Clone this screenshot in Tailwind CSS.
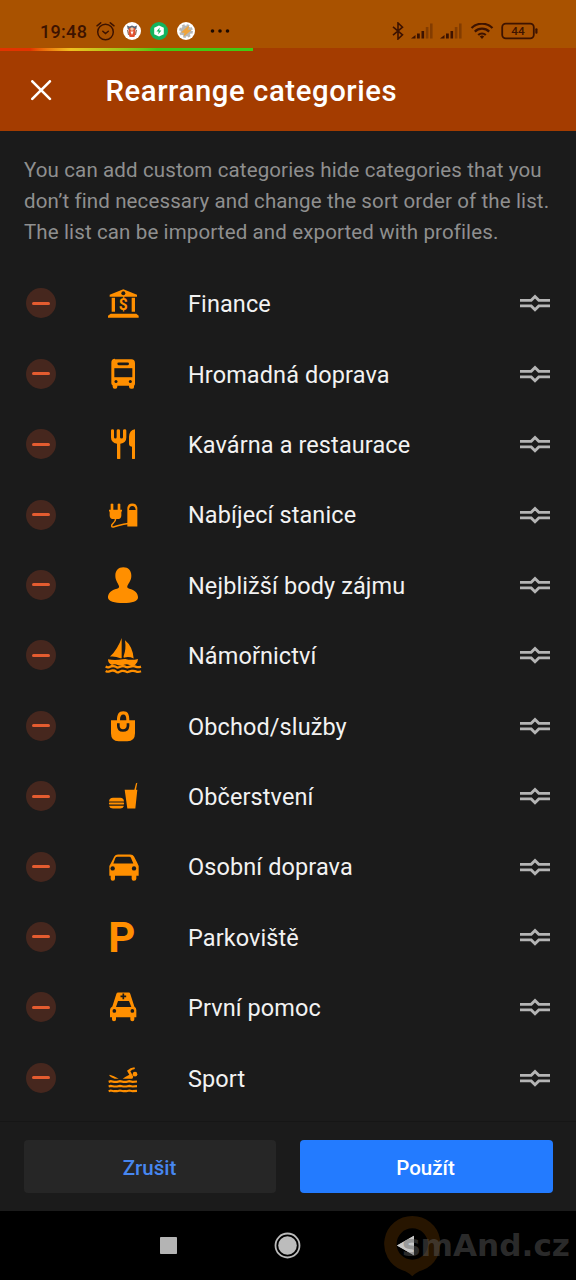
<!DOCTYPE html>
<html lang="cs">
<head>
<meta charset="utf-8">
<title>Rearrange categories</title>
<script src="https://cdn.jsdelivr.net/npm/@tailwindcss/browser@4"></script>
</head>
<body class="bg-black font-['Roboto',sans-serif]">
<div class="relative w-[576px] h-[1280px] overflow-hidden bg-[#1b1b1b] flex flex-col">

  <!-- status bar -->
  <div class="h-[48px] shrink-0 bg-[#a95200] flex items-end pl-10 pr-[38.500px] text-[#3d1300]">
    <div class="flex items-center h-[34px] w-full">
      <span class="w-[56px] text-[18px] leading-none font-medium tracking-[0.300px] pt-[2px]">19:48</span>
      <svg class="w-5 h-5 shrink-0" viewBox="0 0 20 20" fill="none" stroke="currentColor" stroke-width="1.500" stroke-linecap="round"><circle cx="9.500" cy="11" r="7.800"/><path d="M6.800 10.200l2.700 2.400 2.800-2.400M1 4.800L4.700 1.800M18 4.800L14.300 1.800"/></svg>
      <svg class="ml-[7px] w-[18px] h-[18px] shrink-0" viewBox="0 0 18 18"><circle cx="9" cy="9" r="9" fill="#fff"/><path d="M4 3.500l2.500 1 2.500-1 2.500 1 2.500-1-.8 4H4.800z" fill="#5b6675"/><path d="M6 6h6l.8 5-1.500 4H6.700l-1.500-4z" fill="#e2502d"/><circle cx="9" cy="7" r="1.700" fill="#f3c9a5"/><path d="M7.500 9.500h3L9 13z" fill="#fff"/><path d="M4.500 8l1 5M13.500 8l-1 5" stroke="#8a6a55"/></svg>
      <svg class="ml-[9px] w-[18px] h-[18px] shrink-0" viewBox="0 0 18 18"><circle cx="9" cy="9" r="9" fill="#12b45e"/><path d="M9 3.500l4.800 2.200v6.600L9 14.600l-4.800-2.300V5.700z" fill="#fff"/><path d="M9.800 5.500L6.500 9.600h2.200l-.6 3 3.300-4.200H9.200z" fill="#12b45e"/></svg>
      <svg class="ml-[9px] w-[18px] h-[18px] shrink-0" viewBox="0 0 18 18"><circle cx="9" cy="9" r="9" fill="#fff"/><circle cx="9" cy="9" r="5.400" fill="#b7b7b4"/><circle cx="9" cy="9" r="5.900" fill="none" stroke="#b7b7b4" stroke-width="2" stroke-dasharray="2.600 2.030"/><path d="M11.500 4.500L5.500 10l3 .3-1.300 3.200L13 8.500l-2.800-.4z" fill="#f0a53c" stroke="#f0a53c" stroke-width="1.200"/></svg>
      <svg class="ml-[15px] w-5 h-4 shrink-0" viewBox="0 0 20 16" fill="#1c0a00"><circle cx="2.500" cy="8" r="1.800"/><circle cx="10" cy="8" r="1.800"/><circle cx="17.500" cy="8" r="1.800"/></svg>
      <div class="ml-auto flex items-center">
        <svg class="w-3 h-[18px]" viewBox="0 0 12 18" fill="none" stroke="currentColor" stroke-width="1.600"><path d="M1 4.800l9.500 8L6 17V1l4.500 4.200-9.500 8"/></svg>
        <svg class="ml-[7px] w-[22px] h-4" viewBox="0 0 22 16" fill="currentColor"><path d="M0 15.500L4.500 12v3.500zM6 10.500h2.800v5H6zM10.500 8h2.600v7.500h-2.600z"/><path opacity=".35" d="M14.800 4h2.600v11.500h-2.600zM19 .500h2.600v15H19z"/></svg>
        <svg class="ml-[7px] w-[22px] h-4" viewBox="0 0 22 16" fill="currentColor"><path d="M0 15.500L4.500 12v3.500zM6 10.500h2.800v5H6zM10.500 8h2.600v7.500h-2.600z"/><path opacity=".35" d="M14.800 4h2.600v11.500h-2.600zM19 .500h2.600v15H19z"/></svg>
        <svg class="ml-[8px] w-6 h-4" viewBox="0 0 24 16" fill="none" stroke="currentColor" stroke-width="2.200"><path d="M1.500 5a15 15 0 0 1 21 0M4.800 8.600a10.300 10.300 0 0 1 14.400 0M8.200 12a5.600 5.600 0 0 1 7.600 0"/><path d="M9.800 13.600a3 3 0 0 1 4.400 0L12 16z" fill="currentColor" stroke="none"/></svg>
        <svg class="ml-[7px] w-[37px] h-[18px]" viewBox="0 0 37 18"><rect x="1.200" y="1.700" width="31.600" height="14.600" rx="3.600" fill="none" stroke="currentColor" stroke-width="1.800"/><rect x="34.300" y="6.300" width="2.200" height="5.400" rx="1" fill="currentColor"/><text x="17" y="13.200" text-anchor="middle" font-size="11.800" font-weight="500" fill="currentColor">44</text></svg>
      </div>
    </div>
  </div>

  <!-- title bar -->
  <div class="h-[82.500px] shrink-0 bg-[#a43c00]">
    <div class="h-[3px] w-[253px] bg-linear-to-r from-[#e23400] from-12% via-[#f0c020] via-28% to-[#44c814] to-62%"></div>
    <div class="flex items-center h-20 pl-[30px]">
      <svg class="w-[22px] h-[22px]" viewBox="0 0 22 22" fill="none" stroke="#fff" stroke-width="2.600" stroke-linecap="round"><path d="M2.300 1.300l17.600 17.600M19.900 1.300L2.300 18.900"/></svg>
      <h1 class="ml-[53.500px] text-[29.300px] leading-[36px] font-medium tracking-[0.580px] text-white">Rearrange categories</h1>
    </div>
  </div>

  <!-- description -->
  <p class="h-[137.700px] shrink-0 pt-[24.500px] pl-6 text-[20.530px] leading-[31px] tracking-[0.120px] text-[#8f8f8f] whitespace-nowrap">You can add custom categories hide categories that you<br>don’t find necessary and change the sort order of the list.<br>The list can be imported and exported with profiles.</p>

  <!-- categories -->
  <ul id="list" class="shrink-0 h-[853px] text-[23.470px] tracking-[0.110px] text-[#f2f2f2]"></ul>

  <!-- buttons -->
  <div class="h-[90px] shrink-0 border-t border-[#161616] bg-[#1b1b1b] px-[23.500px] pt-[18px] flex gap-6 text-[20.530px] font-medium">
    <button class="flex-1 h-[53px] rounded-[4px] bg-[#262626] text-[#4787f0] pt-[3px]">Zrušit</button>
    <button class="flex-1 h-[53px] rounded-[4px] bg-[#237bff] text-white pt-[3px] pr-px">Použít</button>
  </div>

  <!-- navigation bar -->
  <div class="relative flex-1 bg-black">
    <svg class="w-[576px] h-[70px]" viewBox="0 1211 576 70">
      <rect x="160" y="1237" width="17" height="17" rx=".8" fill="#b4b4b4"/>
      <circle cx="287.500" cy="1245.500" r="12" fill="none" stroke="#bcbcbc" stroke-width="1.800"/>
      <circle cx="287.500" cy="1245.500" r="9.300" fill="#bcbcbc"/>
      <path d="M397 1245.500L414 1235.700V1255.200Z" fill="#c6c6c6"/>
      <path fill-rule="evenodd" d="M412.300 1216a28 28 0 0 1 10.500 54c-4.500 1.300-7 3-10.500 6.300-3.500-3.300-6-5-10.500-6.300a28 28 0 0 1 10.500-54zm0 12.300a15.700 15.700 0 1 0 0 31.400 15.700 15.700 0 0 0 0-31.400z" fill="#271500"/>
      <path d="M397 1245.500L414 1235.700V1255.200Z" fill="#c6c6c6"/>
      <text x="402" y="1255.800" font-family="DejaVu Sans, sans-serif" font-weight="bold" font-size="29.500" textLength="168" lengthAdjust="spacingAndGlyphs" fill="#606060" fill-opacity=".45">smAnd.cz</text>
    </svg>
  </div>
</div>

<template id="row">
  <li class="h-[70.400px] flex items-center pl-[26px] pr-[26px]">
    <span class="w-[30px] h-[30px] rounded-full bg-[#46271e] flex items-center justify-center"><span class="w-[18px] h-[3px] rounded-full bg-[#e45c30]"></span></span>
    <svg data-icon class="ml-[47px] w-10 h-10 overflow-visible" fill="#ff8f00"></svg>
    <span data-name class="ml-[45px] pt-[3px]"></span>
    <svg class="ml-auto w-[30px] h-[20px]" viewBox="0 0 30 20" fill="none" stroke="#b5b5b5" stroke-width="2.800"><path d="M0 7.300h11.200L15 3.400l3.800 3.900H30M0 12.900h11.200l3.800 3.900 3.800-3.900H30"/></svg>
  </li>
</template>
<script>
const D = '#1b1b1b';
const rows = [
 ['Finance', '309 40 120 120', `<path d="M329 81V75L370 58.500L411 75V81Z"/><circle cx="370" cy="71" r="6" fill="${D}"/><path d="M335 84h10v42h-10zM395 84h10v42h-10zM332 132h77l7 6v6h-92v-6z"/><text x="370" y="121" text-anchor="middle" font-size="47" font-weight="bold" letter-spacing="0">$</text>`],
 ['Hromadná doprava', '309 251.400 120 120', `<path d="M345 267h49q11 0 11 12v61q0 5-3 7v4q0 5-6 5h-3q-6 0-6-6v-3h-35v3q0 6-6 6h-2q-6 0-6-6v-4q-4-3-4-7v-61q0-12 11-12z"/><rect x="352" y="277" width="35" height="8" rx="4" fill="${D}"/><path d="M343 294h54v27h-54z" fill="${D}"/><circle cx="348" cy="334" r="4.500" fill="${D}"/><circle cx="391" cy="334" r="4.500" fill="${D}"/>`],
 ['Kavárna a restaurace', '309 462.600 120 120', `<path d="M333 482q0-4 4.500-4t4.500 4v20q0 4 4 4t4-4v-20q0-4 5-4t5 4v20q0 4 4.500 4t4.500-4v-20q0-4 5-4t5 4v21q0 16-18 19v45q-5 1-10 0v-45q-18-4-18-19zM405 478v89q-5 1-9 0v-36q-9-2-9-8v-22q1-21 18-23z"/>`],
 ['Nabíjecí stanice', '309 43.800 120 120', `<path d="M332 71q4-4 8 0v17h13v-17q4-4 8 0v17h5v5h-2v12q0 11-12 11h-11q-12 0-12-11v-12h-2v-5h5z"/><path d="M347 114c0 14-14 15-12 23 2 9 24-7 50-8" fill="none" stroke="#ff8f00" stroke-width="4.500"/><path d="M382 138V82q2-13 15-13t15 13v56z"/><path d="M387 89q1-12 10-12t10 12z" fill="${D}"/>`],
 ['Nejbližší body zájmu', '309 255 120 120', `<path d="M370 262c15 0 24 10 24 25 0 14-8 22-12 31-1 5 1 7 6 8 16 3 27 14 26 27-1 10-17 16-44 16s-45-6-46-16c-1-13 10-24 27-27 5-1 7-3 6-8-3-9-11-17-11-31 0-15 9-25 24-25z"/>`],
 ['Námořnictví', '309 466.200 120 120', `<path d="M365 475v61h-4q-15-7-31-5 23-22 35-56zM375 482q23 18 26 55-14-7-27-3-5 1-3-5 8-20 4-47zM324 539q20 4 44 0l8-1q18 5 38 0 0 11-9 18-9 4-17 0-8-4-18 0-8 4-17 0-8-4-17 0-12-4-12-17z"/><path d="M317 561q5 3 9 2l9-3q9-1 13 2t9 1l8-3q8-1 13 2 4 2 9 0l8-2q9-1 14 2 6 2 14-1M317 574q5 3 9 2l9-3q9-1 13 3t9 1l8-3q8-1 13 2 4 3 9 0l8-2q9-1 14 2 6 2 14-1" fill="none" stroke="#ff8f00" stroke-width="7"/>`],
 ['Obchod/služby', '309 47.400 120 120', `<path d="M333 90h18c0-17 5-27 19-27s18 10 18 27h17v39q0 24-23 24h-26q-23 0-23-24zm27 0h19c0-11-2-17-9-17s-10 6-10 17z" fill-rule="evenodd"/><path d="M355 99v8q0 14 14 14t15-14v-8" fill="none" stroke="${D}" stroke-width="8"/>`],
 ['Občerstvení', '309 258.600 120 120', `<path d="M327 335q1-11 12-11h22q10 0 11 11zM328 338h43q3 3 0 6h-43q-3-3 0-6zM328 348h43v2q-2 6-10 6h-22q-9 0-11-6zM374 300h29l5-20 4-1-4 21h4l-6 56h-24z"/>`],
 ['Osobní doprava', '309 469.800 120 120', `<path fill-rule="evenodd" d="M350 492h41q8 0 11 6l10 20 4 9v29h-7v9q0 6-7 6h-1q-6 0-6-6v-9h-50v9q0 6-6 6h-1q-6 0-6-6v-9h-4v-29l5-9 10-20q3-6 11-6zm2 7q-4 0-6 4l-6 16h60l-7-16q-1-4-5-4z"/><circle cx="338" cy="534" r="6.500" fill="${D}"/><circle cx="402" cy="534" r="6.500" fill="${D}"/>`],
 ['Parkoviště', '309 51 120 120', `<text x="325" y="155.500" font-size="126" font-weight="bold" letter-spacing="0">P</text>`],
 ['První pomoc', '309 262.200 120 120', `<path fill-rule="evenodd" d="M355 279h31q4 0 5 4l12 38q6 4 6 10v22h-6v7q0 5-6 5t-6-5v-7h-43v7q0 5-6 5t-6-5v-7h-6v-22q0-6 7-10l12-38q1-4 6-4zm-1 25l-6 18h46l-7-18z"/><path d="M367.500 282h5v6h6v5h-6v6h-5v-6h-6v-5h6z" fill="${D}"/><circle cx="343" cy="334" r="5.500" fill="${D}"/><circle cx="397" cy="334" r="5.500" fill="${D}"/>`],
 ['Sport', '309 473.400 120 120', `<path d="M329 524q12 3 27 12h-12q-12-5-16-9zM381 512q10-10 22-11 4 3 0 6-7 0-12 6l9 17-3 6h-29q8-6 20-12z"/><circle cx="405" cy="522" r="7"/><path d="M326 545l6-2 10 2 9 0 9-2 10 2 9 0 9-2 10 2 13-1M326 559l6-2 10 2 9 0 9-2 10 2 9 0 9-2 10 2 13-1M326 573l6-2 10 2 9 0 9-2 10 2 9 0 9-2 10 2 13-1" fill="none" stroke="#ff8f00" stroke-width="6.500"/>`]
];
const tpl = document.getElementById('row'), list = document.getElementById('list');
for (const [name, box, art] of rows) {
  const li = tpl.content.cloneNode(true);
  const icon = li.querySelector('[data-icon]');
  icon.setAttribute('viewBox', box);
  icon.innerHTML = art;
  li.querySelector('[data-name]').textContent = name;
  list.append(li);
}
</script>
</body>
</html>
